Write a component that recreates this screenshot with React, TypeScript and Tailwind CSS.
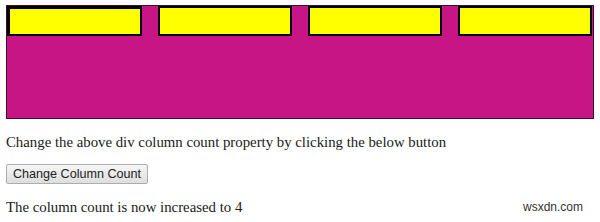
export default function App() {
  const cols = [0, 1, 2, 3];
  return (
    <div className="w-[600px] h-[222px] bg-white px-[6px] pt-[5px] font-['Liberation_Serif',serif] text-[14.8px] text-[#1a1a1a]">
      {/* 컬럼 박스 */}
      <div className="h-[114px] border border-[#3a1030] bg-[#c71585] flex gap-[16px] pr-[1px]">
        {cols.map((i) => (
          <div
            key={i}
            className={`flex-1 h-[30px] bg-[#ffff00] border-2 border-black ${i === 0 ? 'border-t-[3px] border-l-[3px]' : ''}`}
          />
        ))}
      </div>

      <p className="mt-[14px] leading-[18px]">
        Change the above div column count property by clicking the below button
      </p>

      <button className="mt-[13px] h-[20px] px-[6px] border border-[#adadad] rounded-[2px] bg-gradient-to-b from-[#f6f6f6] to-[#dedede] font-['Liberation_Sans',sans-serif] text-[12.6px] text-[#222] leading-none">
        Change Column Count
      </button>

      <div className="flex justify-between items-end mt-[14px]">
        <p className="leading-[18px]">The column count is now increased to 4</p>
        <span className="font-['Liberation_Sans',sans-serif] text-[12px] text-[#333] mr-[11px]">wsxdn.com</span>
      </div>
    </div>
  );
}
